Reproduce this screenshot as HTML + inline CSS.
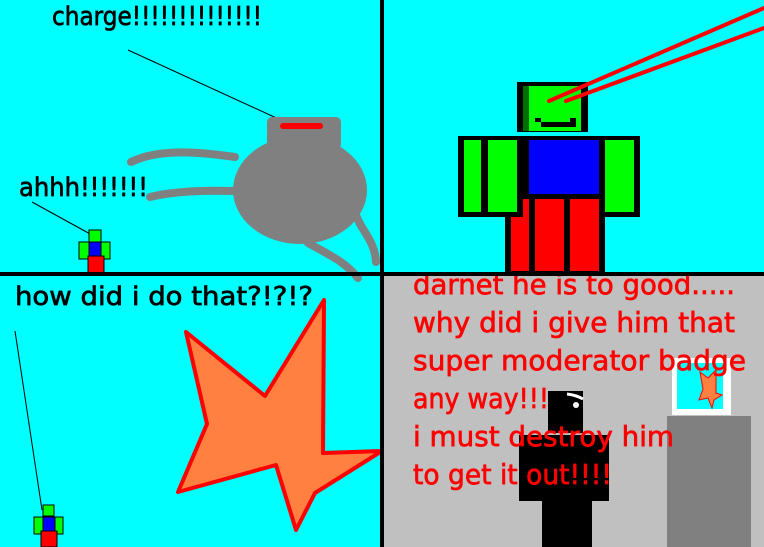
<!DOCTYPE html>
<html><head><meta charset="utf-8"><style>
html,body{margin:0;padding:0;width:764px;height:547px;overflow:hidden;background:#0ff}
svg{display:block}
text{font-family:"DejaVu Sans","Liberation Sans",sans-serif;stroke-width:0.7}
</style></head><body>
<svg width="764" height="547" viewBox="0 0 764 547" xmlns="http://www.w3.org/2000/svg">
<rect width="764" height="547" fill="#0ff"/>
<rect x="384" y="276" width="380" height="271" fill="#c0c0c0"/>

<!-- TOP LEFT -->
<text x="52" y="25" font-size="26" fill="#000" stroke="#000" textLength="210" lengthAdjust="spacingAndGlyphs">charge!!!!!!!!!!!!!!</text>
<line x1="128" y1="50" x2="283" y2="121" stroke="#000" stroke-width="1"/>
<g stroke="#808080" stroke-width="8" fill="none" stroke-linecap="round">
<path d="M235,157 C200,152 160,148 131,162"/>
<path d="M235,191 C200,190 170,192 150,197"/>
<path d="M355,212 C360,230 375,240 376,262"/>
<path d="M308,243 C330,255 345,262 358,278"/>
</g>
<ellipse cx="300" cy="190" rx="67" ry="54" fill="#808080"/>
<rect x="267" y="117" width="74" height="32" rx="5" fill="#808080"/>
<rect x="280" y="123" width="43" height="6" rx="3" fill="#f00"/>
<text x="19" y="196" font-size="26" fill="#000" stroke="#000" textLength="129" lengthAdjust="spacingAndGlyphs">ahhh!!!!!!!</text>
<line x1="32" y1="202" x2="92" y2="235" stroke="#000" stroke-width="1"/>
<g stroke="#000" stroke-width="1">
<rect x="89" y="230" width="12" height="12" fill="#0f0"/>
<rect x="79" y="242" width="10" height="17" fill="#0f0"/>
<rect x="101" y="242" width="9" height="17" fill="#0f0"/>
<rect x="89" y="242" width="12" height="14" fill="#00f"/>
<rect x="88" y="256" width="16" height="17" fill="#f00"/>
</g>

<!-- TOP RIGHT robot -->
<rect x="505" y="197" width="100" height="76" fill="#000"/>
<rect x="511" y="199" width="18" height="72" fill="#f00"/>
<rect x="535" y="199" width="29" height="72" fill="#f00"/>
<rect x="570" y="199" width="29" height="72" fill="#f00"/>
<rect x="517" y="82" width="71" height="50" fill="#000"/>
<rect x="523" y="86" width="6" height="45" fill="#006f00"/>
<rect x="529" y="86" width="52" height="45" fill="#0f0"/>
<rect x="535" y="118" width="6" height="4" fill="#000"/>
<rect x="570" y="118" width="6" height="4" fill="#000"/>
<rect x="541" y="122" width="35" height="5" fill="#000"/>
<rect x="458" y="136" width="65" height="81" fill="#000"/>
<rect x="523" y="136" width="82" height="63" fill="#000"/>
<rect x="600" y="136" width="40" height="81" fill="#000"/>
<rect x="464" y="140" width="17" height="72" fill="#0f0"/>
<rect x="488" y="140" width="29" height="72" fill="#0f0"/>
<rect x="529" y="140" width="70" height="54" fill="#00f"/>
<rect x="605" y="140" width="29" height="72" fill="#0f0"/>
<g stroke="#f00" stroke-width="4" stroke-linecap="round">
<line x1="549" y1="101" x2="764" y2="8"/>
<line x1="566" y1="101" x2="764" y2="28"/>
</g>

<!-- BOTTOM LEFT -->
<text x="15" y="305" font-size="26" fill="#000" stroke="#000" textLength="298" lengthAdjust="spacingAndGlyphs">how did i do that?!?!?</text>
<line x1="15" y1="331" x2="42" y2="510" stroke="#000" stroke-width="1"/>
<polygon points="186,332 265,396 324,300 323,453 382,451 315,493 296,530 276,465 178,492 207,424" fill="#ff8040" stroke="#f00" stroke-width="4" stroke-linejoin="round"/>
<g stroke="#000" stroke-width="1">
<rect x="43" y="505" width="11" height="11" fill="#0f0"/>
<rect x="34" y="517" width="9" height="17" fill="#0f0"/>
<rect x="55" y="517" width="8" height="17" fill="#0f0"/>
<rect x="43" y="517" width="12" height="14" fill="#00f"/>
<rect x="41" y="531" width="16" height="16" fill="#f00"/>
</g>

<!-- BOTTOM RIGHT -->
<rect x="667" y="416" width="84" height="131" fill="#808080"/>
<rect x="672" y="358" width="59" height="57" fill="#fff"/>
<rect x="677" y="363" width="46" height="46" fill="#0ff"/>
<polygon points="700,372 708,378 716,370 716,393 722,395 714,400 712,408 708,398 699,400 703,389" fill="#ff8040" stroke="#f00" stroke-width="1"/>
<rect x="548" y="391" width="35" height="42" fill="#000"/>
<rect x="519" y="435" width="90" height="66" fill="#000"/>
<rect x="542" y="500" width="50" height="47" fill="#000"/>
<path d="M567,394 Q576,395 583,399" stroke="#fff" stroke-width="3" fill="none"/>
<circle cx="576" cy="405" r="3" fill="#fff"/>
<g font-size="28" fill="#f00" stroke="#f00">
<text x="413" y="294" textLength="322" lengthAdjust="spacingAndGlyphs">darnet he is to good.....</text>
<text x="413" y="332" textLength="322" lengthAdjust="spacingAndGlyphs">why did i give him that</text>
<text x="413" y="370" textLength="333" lengthAdjust="spacingAndGlyphs">super moderator badge</text>
<text x="413" y="408" textLength="136" lengthAdjust="spacingAndGlyphs">any way!!!</text>
<text x="413" y="446" textLength="261" lengthAdjust="spacingAndGlyphs">i must destroy him</text>
<text x="413" y="484" textLength="199" lengthAdjust="spacingAndGlyphs">to get it out!!!!</text>
</g>

<rect x="380" y="0" width="4" height="547" fill="#000"/>
<rect x="0" y="272" width="764" height="4" fill="#000"/>
</svg>
</body></html>
